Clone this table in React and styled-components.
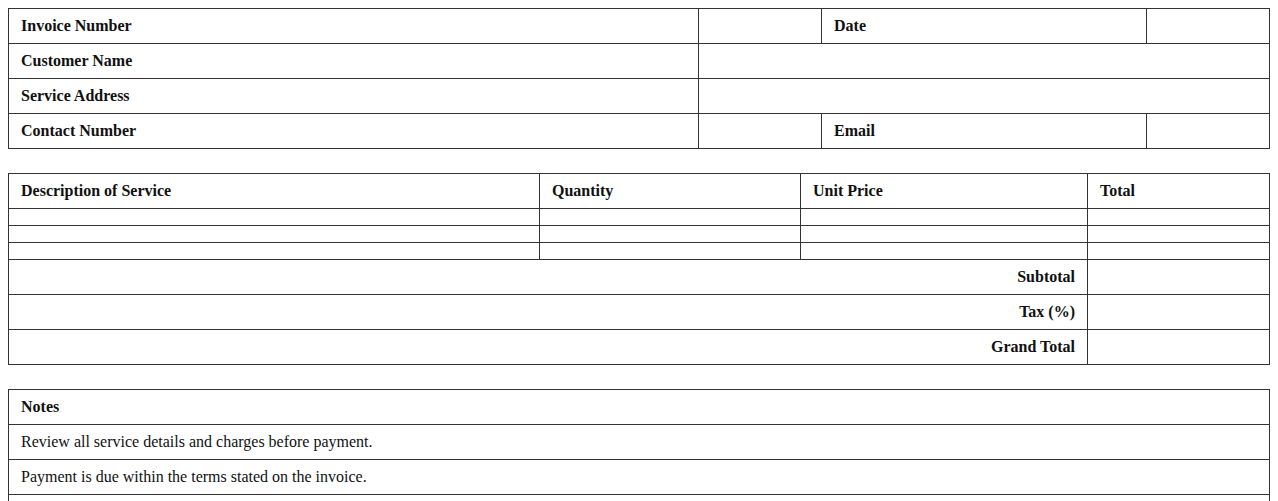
import React from 'react'
import styled, { createGlobalStyle } from 'styled-components'

const GlobalStyle = createGlobalStyle`
  body {
    margin: 8px;
    background: #fff;
    font-family: "Liberation Serif", "Times New Roman", serif;
    font-size: 16px;
    color: #111;
  }
`;

const Table = styled.table`
  width: 100%;
  border-collapse: collapse;
  table-layout: fixed;
  margin-bottom: 24px;
`;

const Label = styled.th`
  border: 1px solid #333;
  padding: 8px 12px;
  font-weight: bold;
  text-align: ${p => p.$right ? 'right' : 'left'};
  line-height: 18px;
`;

const Cell = styled.td`
  border: 1px solid #333;
  padding: 8px 12px;
  line-height: 18px;
  ${p => p.$empty && 'line-height: 0; font-size: 0;'}
`;

// last column takes what is left
const infoCols = [690, 123, 325];
const itemCols = [531, 261, 287];

const Cols = ({ widths }) => (
  <colgroup>
    {widths.map((w, i) => <col key={i} style={{ width: w }} />)}
    <col />
  </colgroup>
);

export default function App() {
  return (
    <>
      <GlobalStyle />
      <Table>
        <Cols widths={infoCols} />
        <tbody>
          <tr>
            <Label>Invoice Number</Label>
            <Cell></Cell>
            <Label>Date</Label>
            <Cell></Cell>
          </tr>
          <tr>
            <Label>Customer Name</Label>
            <Cell colSpan={3}></Cell>
          </tr>
          <tr>
            <Label>Service Address</Label>
            <Cell colSpan={3}></Cell>
          </tr>
          <tr>
            <Label>Contact Number</Label>
            <Cell></Cell>
            <Label>Email</Label>
            <Cell></Cell>
          </tr>
        </tbody>
      </Table>

      <Table>
        <Cols widths={itemCols} />
        <thead>
          <tr>
            <Label>Description of Service</Label>
            <Label>Quantity</Label>
            <Label>Unit Price</Label>
            <Label>Total</Label>
          </tr>
        </thead>
        <tbody>
          {[0, 1, 2].map(r => (
            <tr key={r}>
              <Cell $empty></Cell>
              <Cell $empty></Cell>
              <Cell $empty></Cell>
              <Cell $empty></Cell>
            </tr>
          ))}
          <tr>
            <Label $right colSpan={3}>Subtotal</Label>
            <Cell></Cell>
          </tr>
          <tr>
            <Label $right colSpan={3}>Tax (%)</Label>
            <Cell></Cell>
          </tr>
          <tr>
            <Label $right colSpan={3}>Grand Total</Label>
            <Cell></Cell>
          </tr>
        </tbody>
      </Table>

      <Table>
        <tbody>
          <tr><Label>Notes</Label></tr>
          <tr><Cell>Review all service details and charges before payment.</Cell></tr>
          <tr><Cell>Payment is due within the terms stated on the invoice.</Cell></tr>
          <tr><Cell>&nbsp;</Cell></tr>
        </tbody>
      </Table>
    </>
  )
}
